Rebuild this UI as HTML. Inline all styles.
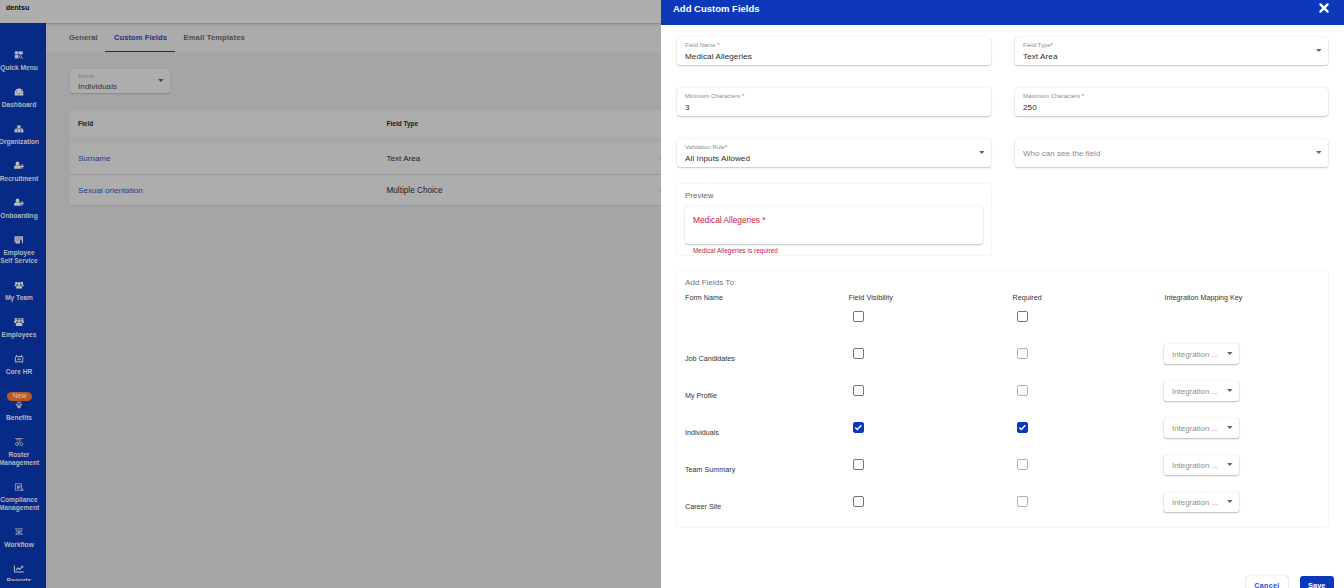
<!DOCTYPE html><html><head><meta charset="utf-8"><title>Add Custom Fields</title><style>
*{box-sizing:border-box;margin:0;padding:0}
html,body{width:1344px;height:588px;overflow:hidden;background:#a5a5a5;font-family:"Liberation Sans",sans-serif;}
.a{position:absolute}
.t{position:absolute;white-space:nowrap;line-height:10px;height:10px}
#left{position:absolute;left:0;top:0;width:661px;height:588px;overflow:hidden;background:#a5a5a5}
#topbar{position:absolute;left:0;top:0;width:661px;height:23px;background:#aeaeae;box-shadow:0 1.2px 2.8px rgba(0,0,0,.42);z-index:3}
#side{position:absolute;left:0;top:23px;width:46px;height:565px;background:#072a86;overflow:hidden;z-index:4}
#side .l{position:absolute;left:-11px;width:60px;text-align:center;font-size:6.6px;font-weight:700;color:#b7b7ba;line-height:8px;white-space:nowrap}
#side svg{position:absolute}
#tabs{position:absolute;left:46px;top:23px;width:615px;height:29px;background:#ababab}
.tab{position:absolute;top:9.5px;font-size:7.5px;font-weight:700;letter-spacing:.1px;color:#4f4a46;line-height:10px;white-space:nowrap}
.card{position:absolute;background:#fff;border-radius:2.7px;box-shadow:0 0 1.2px rgba(0,0,0,.2),0 1px 1.8px rgba(0,0,0,.2)}
.lab{position:absolute;left:8px;top:4.3px;font-size:6px;color:#8c8c8c;line-height:8px;white-space:nowrap}
.lab i{font-style:normal;color:#f0464b}
.val{position:absolute;left:8px;top:15.1px;font-size:8.1px;letter-spacing:.09px;color:#2b2b2b;line-height:10px;white-space:nowrap}
svg.arr{position:absolute;width:5.6px;height:3px}
#panel{position:absolute;left:661px;top:0;width:683px;height:588px;background:#fff;overflow:hidden}
#phead{position:absolute;left:0;top:0;width:683px;height:24.5px;background:#0b39ba}
.cb{position:absolute;width:10.6px;height:10.6px;border:1.25px solid #757575;border-radius:2px;background:#fff}
.cb.d{border-color:#b0b0b0}
.cb.on{border-color:#0b39ba;background:#0b39ba}
.fn{position:absolute;left:24px;font-size:7.2px;color:#333;line-height:10px;white-space:nowrap}
.h{position:absolute;font-size:7.2px;color:#333;line-height:10px;white-space:nowrap}
.dd{position:absolute;left:503px;width:75.3px;height:20.3px;background:#fff;border-radius:2.5px;box-shadow:0 0 1px rgba(0,0,0,.3),0 1px 2px rgba(0,0,0,.25)}
.dd span{position:absolute;left:8px;top:6.3px;font-size:7.9px;color:#8e8e8e;line-height:10px;white-space:nowrap}
</style></head><body>
<div id="left">
<div id="topbar"><div class="t" style="left:6px;top:2.6px;font-size:7.1px;font-weight:700;color:#0a0a0a">dentsu</div></div>
<div id="side">
<svg style="left:13.2px;top:26.5px" width="12" height="10" viewBox="-6 -5 12 10"><g fill="#bcbcbc"><rect x="-4.2" y="-3.6" width="3.7" height="3"/><rect x="0" y="-3.6" width="3.8" height="3"/><rect x="-4.2" y="0.1" width="3.7" height="3.3"/></g><circle cx="1.5" cy="1.6" r="1" fill="none" stroke="#bcbcbc" stroke-width=".8"/><path d="M2.3 2.4L3.8 3.8" stroke="#bcbcbc" stroke-width=".9"/></svg>
<div class="l" style="top:40.5px">Quick Menu</div>
<svg style="left:13.2px;top:63.7px" width="12" height="10" viewBox="-6 -5 12 10"><path d="M-4.3 3.4V0.6A4.3 4.1 0 0 1 4.3 0.6V3.4Z" fill="#bcbcbc"/><g fill="#3a5aa8"><circle cx="-2.6" cy="0.8" r=".55"/><circle cx="-1.7" cy="-1.2" r=".5"/><circle cx="2.2" cy="-1.2" r=".5"/><circle cx="2.8" cy="0.8" r=".5"/><circle cx="0.2" cy="1.8" r=".8"/></g></svg>
<div class="l" style="top:77.5px">Dashboard</div>
<svg style="left:13.2px;top:100.7px" width="12" height="10" viewBox="-6 -5 12 10"><g fill="#bcbcbc"><rect x="-1.8" y="-3.5" width="3.4" height="2.4"/><rect x="-.5" y="-1.2" width=".9" height="1.4"/><rect x="-3.6" y="-.5" width="7.2" height=".9"/><rect x="-4.4" y=".3" width="2.7" height="3.1"/><rect x="-1.4" y=".3" width="2.7" height="3.1"/><rect x="1.7" y=".3" width="2.7" height="3.1"/></g></svg>
<div class="l" style="top:114.5px">Organization</div>
<svg style="left:13.2px;top:138.2px" width="12" height="10" viewBox="-6 -5 12 10"><g fill="#bcbcbc"><circle cx="-1.5" cy="-2.6" r="1.9"/><path d="M-4.9 2.8V1.2A2 2 0 0 1 -2.9 -.8H-.1A2 2 0 0 1 1.9 1.2V2.8Z"/><rect x="1.2" y="-.2" width="3.7" height="1.1"/><rect x="2.5" y="-1.9" width="1.1" height="4.5"/></g></svg>
<div class="l" style="top:151.5px">Recruitment</div>
<svg style="left:13.2px;top:174.8px" width="12" height="10" viewBox="-6 -5 12 10"><g fill="#bcbcbc"><circle cx="-1.5" cy="-2.6" r="1.9"/><path d="M-4.9 2.8V1.2A2 2 0 0 1 -2.9 -.8H-.1A2 2 0 0 1 1.9 1.2V2.8Z"/><rect x="1.2" y="-.2" width="3.7" height="1.1"/><rect x="2.5" y="-1.9" width="1.1" height="4.5"/></g></svg>
<div class="l" style="top:188.5px">Onboarding</div>
<svg style="left:13.2px;top:211.5px" width="12" height="10" viewBox="-6 -5 12 10"><rect x="-4" y="-3.2" width="7.6" height="5" fill="#8f95ab" stroke="#bcbcbc" stroke-width=".9"/><rect x="-3.2" y="1.8" width="4.6" height="1.7" fill="#bcbcbc"/><rect x="1" y=".4" width="2.2" height="3.2" fill="#072a86"/><rect x="3.1" y=".4" width=".8" height="3.1" fill="#bcbcbc"/></svg>
<div class="l" style="top:225.5px">Employee</div>
<div class="l" style="top:233.5px">Self Service</div>
<svg style="left:13.2px;top:256.5px" width="12" height="10" viewBox="-6 -5 12 10"><g fill="#bcbcbc"><circle cx="-2.7" cy="-2" r="1.25"/><circle cx="2.9" cy="-2" r="1.25"/><circle cx=".1" cy="-1.2" r="1.7"/><path d="M-4.5 1.3V.2A1.2 1.2 0 0 1 -3.3 -.8H-2A3 3 0 0 0 -2.6 1.3Z"/><path d="M4.7 1.3V.2A1.2 1.2 0 0 0 3.5 -.8H2.2A3 3 0 0 1 2.8 1.3Z"/><path d="M-2.9 3.5V2.4A2 2 0 0 1 -.9 .6H1.1A2 2 0 0 1 3.1 2.4V3.5Z"/></g></svg>
<div class="l" style="top:270.6px">My Team</div>
<svg style="left:13.2px;top:294.0px" width="12" height="10" viewBox="-6 -5 12 10"><g fill="#8f95ab"><rect x="-4.8" y="-4" width="2.9" height="1.2"/><rect x="-1.3" y="-4" width="2.9" height="1.2"/><rect x="2.2" y="-4" width="2.6" height="1.2"/></g><g fill="#bcbcbc"><circle cx="-3" cy="-1.7" r="1.2"/><circle cx="3.2" cy="-1.7" r="1.2"/><circle cx=".1" cy="-1.2" r="1.6"/><path d="M-4.9 1V0A1 1 0 0 1 -3.9 -.9H-2.2A3 3 0 0 0 -2.6 1Z"/><path d="M4.9 1V0A1 1 0 0 0 3.9 -.9H2.4A3 3 0 0 1 2.8 1Z"/><path d="M-3.2 4V2.4A2 2 0 0 1 -1.2 .6H1.4A2 2 0 0 1 3.4 2.4V4Z"/></g></svg>
<div class="l" style="top:307.5px">Employees</div>
<svg style="left:13.2px;top:330.8px" width="12" height="10" viewBox="-6 -5 12 10"><g fill="none" stroke="#bcbcbc" stroke-width=".95"><rect x="-3.6" y="-2.4" width="7.4" height="5.2" rx=".6"/><path d="M-2.4 -2.4V-4M2.4 -2.4V-4"/><path d="M-3.2 2.9V3.8M3.4 2.9V3.8"/></g><rect x="-1.7" y="-.6" width="3.6" height="1.7" fill="#8f95ab"/></svg>
<div class="l" style="top:344.5px">Core HR</div>
<svg style="left:13.2px;top:376.6px" width="12" height="10" viewBox="-6 -5 12 10"><g fill="#8f95ab"><circle cx="0" cy="1.6" r="2"/><circle cx="-2.2" cy="-.4" r="1.1"/><circle cx="2.2" cy="-.4" r="1.1"/><circle cx="-1" cy="-2.4" r="1"/><circle cx="1.1" cy="-2.4" r="1"/></g><circle cx="0" cy="1.7" r=".8" fill="#bcbcbc"/></svg>
<div class="l" style="top:390.5px">Benefits</div>
<svg style="left:13.2px;top:414.0px" width="12" height="10" viewBox="-6 -5 12 10"><g fill="none" stroke="#8f95ab" stroke-width=".9"><path d="M-4 -3.5H4.2"/><path d="M-3 -2.2H1M2 -2.6L-1 1.5"/><circle cx="-2" cy="2" r="1.5"/><circle cx="2.2" cy="2" r="1.5"/></g></svg>
<div class="l" style="top:427.5px">Roster</div>
<div class="l" style="top:435.5px">Management</div>
<svg style="left:13.2px;top:458.7px" width="12" height="10" viewBox="-6 -5 12 10"><rect x="-3.6" y="-3.2" width="6.2" height="6.4" fill="none" stroke="#8f95ab" stroke-width=".9"/><rect x="-2.1" y="-1.4" width="2.6" height="3.2" fill="#8f95ab"/><path d="M1.2 -2V1" stroke="#8f95ab" stroke-width=".7"/><circle cx="3.2" cy="2.8" r="1" fill="#072a86" stroke="#bcbcbc" stroke-width=".7"/></svg>
<div class="l" style="top:472.5px">Compliance</div>
<div class="l" style="top:480.5px">Management</div>
<svg style="left:13.2px;top:503.5px" width="12" height="10" viewBox="-6 -5 12 10"><g stroke="#8f95ab" stroke-width=".9" fill="none"><path d="M-4 -3.2H4M-3 -1.2L3 2.4M3 -1.2L-3 2.4M0 -3V3.4"/></g><g fill="#8f95ab"><circle cx="0" cy=".3" r="1.3"/><circle cx="-2.6" cy="2.2" r=".9"/><circle cx="2.8" cy="2.2" r=".9"/><circle cx="2.6" cy="-1.6" r=".8"/><circle cx="-2.6" cy="-1.6" r=".8"/></g></svg>
<div class="l" style="top:517.5px">Workflow</div>
<svg style="left:13.2px;top:540.5px" width="12" height="10" viewBox="-6 -5 12 10"><path d="M-4.6 -3.5V3H4.8" fill="none" stroke="#bcbcbc" stroke-width="1"/><path d="M-3 1.2L-1 -1L.6 .4L3.6 -2.6" fill="none" stroke="#bcbcbc" stroke-width="1.1"/><path d="M2 -3.2H4.2V-1Z" fill="#bcbcbc"/></svg>
<div class="l" style="top:553.6px">Reports</div>
<div class="a" style="left:7px;top:369px;width:25px;height:9px;border-radius:4.5px;background:#b95a28"></div><div class="a" style="left:7px;top:367.8px;width:25px;line-height:9px;text-align:center;font-size:6.9px;font-weight:400;color:#d6c6bc">New</div>
<div class="a" style="left:0;top:558px;width:46px;height:10px;background:#072a86"></div>
</div>
<div id="tabs">
<div class="tab" style="left:23px">General</div>
<div class="tab" style="left:68px;color:#15338f">Custom Fields</div>
<div class="tab" style="left:137.5px;letter-spacing:.18px">Email Templates</div>
<div class="a" style="left:59px;top:27.6px;width:70px;height:1.4px;background:#0b2f9c"></div>
</div>
<div class="a" style="left:70px;top:68.5px;width:100.3px;height:24.6px;background:#adadad;border-radius:2.5px;box-shadow:0 0 1px rgba(0,0,0,.13),0 1px 1.6px rgba(0,0,0,.16)"><div class="lab" style="top:3.5px;color:#777;font-size:5.6px">Forms</div><div class="val" style="top:13.3px;color:#333">Individuals</div><svg class="arr" style="left:88px;top:10.3px" viewBox="0 0 5.6 3"><path d="M0 0H5.6L2.8 3Z" fill="#4a4a4a"/></svg></div>
<div class="a" style="left:70px;top:110px;width:600px;height:27px;background:#adadad"></div>
<div class="a" style="left:70px;top:137px;width:600px;height:6px;background:#a8a8a8"></div>
<div class="a" style="left:70px;top:143px;width:600px;height:31.5px;background:#adadad;border-bottom:1px solid #999"></div>
<div class="a" style="left:70px;top:174.5px;width:600px;height:31px;background:#adadad;border-bottom:1px solid #999"></div>
<div class="t" style="left:78px;top:118.5px;font-size:6.6px;font-weight:700;color:#1a1a1a">Field</div>
<div class="t" style="left:386.5px;top:118.5px;font-size:6.5px;font-weight:700;color:#1a1a1a">Field Type</div>
<div class="t" style="left:78px;top:154px;font-size:8px;color:#1d3a94">Surname</div>
<div class="t" style="left:78px;top:186px;font-size:8.1px;color:#1d3a94">Sexual orientation</div>
<div class="t" style="left:386.5px;top:154px;font-size:8.1px;color:#222">Text Area</div>
<div class="t" style="left:386.5px;top:186px;font-size:8.2px;color:#222">Multiple Choice</div>
<div class="a" style="left:660px;top:121.5px;width:1px;height:1.6px;background:#b98a3c"></div>
<div class="a" style="left:660px;top:156px;width:1px;height:1.6px;background:#b98a3c"></div>
<div class="a" style="left:660px;top:159px;width:1px;height:1.6px;background:#b98a3c"></div>
<div class="a" style="left:660px;top:188px;width:1px;height:1.6px;background:#b98a3c"></div>
<div class="a" style="left:660px;top:191px;width:1px;height:1.6px;background:#b98a3c"></div>
</div>
<div id="panel">
<div id="phead"><div class="t" style="left:12px;top:4px;font-size:9.5px;font-weight:700;color:#fff">Add Custom Fields</div><svg class="a" style="left:657px;top:2.4px" width="12" height="12" viewBox="0 0 12 12"><path d="M2.4 2.4 L9.6 9.6 M9.6 2.4 L2.4 9.6" stroke="#fff" stroke-width="2.3" stroke-linecap="round" stroke-linejoin="round"/></svg></div>
<div class="card" style="left:16px;top:36.7px;width:314px;height:28.2px"><div class="lab">Field Name<i> *</i></div><div class="val">Medical Allegeries</div></div>
<div class="card" style="left:354px;top:36.7px;width:313.3px;height:28.2px"><div class="lab">Field Type<i>*</i></div><div class="val">Text Area</div><svg class="arr" style="right:6.9px;top:12.3px" viewBox="0 0 5.6 3"><path d="M0 0H5.6L2.8 3Z" fill="#686868"/></svg></div>
<div class="card" style="left:16px;top:87.7px;width:314px;height:28.2px"><div class="lab">Minimum Characters<i> *</i></div><div class="val">3</div></div>
<div class="card" style="left:354px;top:87.7px;width:313.3px;height:28.2px"><div class="lab">Maximum Characters<i> *</i></div><div class="val">250</div></div>
<div class="card" style="left:16px;top:138.7px;width:314px;height:28.2px"><div class="lab">Validation Rule<i>*</i></div><div class="val">All Inputs Allowed</div><svg class="arr" style="right:6.9px;top:12.3px" viewBox="0 0 5.6 3"><path d="M0 0H5.6L2.8 3Z" fill="#686868"/></svg></div>
<div class="card" style="left:354px;top:138.7px;width:313.3px;height:28.2px"><div class="val" style="top:10px;font-size:8.05px;letter-spacing:0;color:#8a8a8a">Who can see the field</div><svg class="arr" style="right:6.9px;top:12.3px" viewBox="0 0 5.6 3"><path d="M0 0H5.6L2.8 3Z" fill="#686868"/></svg></div>
<div class="card" style="left:16px;top:183.6px;width:314px;height:71.8px;box-shadow:0 0 2px rgba(0,0,0,.14)"><div class="t" style="left:8px;top:7.2px;font-size:8px;color:#666">Preview</div><div class="card" style="left:7.8px;top:22.3px;width:298.4px;height:38.1px"><div class="t" style="left:8.3px;top:9.3px;font-size:8.3px;color:#c2183a">Medical Allegeries <span style="color:#e0263a">*</span></div></div><div class="t" style="left:16px;top:62.3px;font-size:6.3px;letter-spacing:.1px;color:#c2183a">Medical Allegeries is required</div></div>
<div class="card" style="left:16px;top:270.6px;width:651.3px;height:256.2px;box-shadow:0 0 2px rgba(0,0,0,.14)"></div>
<div class="t" style="left:24px;top:277.7px;font-size:8.1px;color:#757575">Add Fields To:</div>
<div class="h" style="left:24px;top:292.6px">Form Name</div>
<div class="h" style="left:187.5px;top:292.6px;font-size:7.35px">Field Visibility</div>
<div class="h" style="left:351.5px;top:292.6px">Required</div>
<div class="h" style="left:503.5px;top:292.6px">Integration Mapping Key</div>
<div class="cb" style="left:192.3px;top:311.3px"></div>
<div class="cb" style="left:356.3px;top:311.3px"></div>
<div class="cb" style="left:192.3px;top:348.3px"></div>
<div class="cb d" style="left:356.3px;top:348.3px"></div>
<div class="fn" style="top:353.5px">Job Candidates</div>
<div class="dd" style="top:343.8px"><span>Integration ...</span><svg class="arr" style="left:63.3px;top:8.5px" viewBox="0 0 5.6 3"><path d="M0 0H5.6L2.8 3Z" fill="#686868"/></svg></div>
<div class="cb" style="left:192.3px;top:385.3px"></div>
<div class="cb d" style="left:356.3px;top:385.3px"></div>
<div class="fn" style="top:390.5px">My Profile</div>
<div class="dd" style="top:380.8px"><span>Integration ...</span><svg class="arr" style="left:63.3px;top:8.5px" viewBox="0 0 5.6 3"><path d="M0 0H5.6L2.8 3Z" fill="#686868"/></svg></div>
<div class="cb on" style="left:192.3px;top:422.3px"><svg class="a" style="left:-1.25px;top:-1.25px" width="10.6" height="10.6" viewBox="0 0 11 11"><path d="M2.4 5.6 L4.5 7.7 L8.7 3.3" fill="none" stroke="#fff" stroke-width="1.5"/></svg></div>
<div class="cb on" style="left:356.3px;top:422.3px"><svg class="a" style="left:-1.25px;top:-1.25px" width="10.6" height="10.6" viewBox="0 0 11 11"><path d="M2.4 5.6 L4.5 7.7 L8.7 3.3" fill="none" stroke="#fff" stroke-width="1.5"/></svg></div>
<div class="fn" style="top:427.5px">Individuals</div>
<div class="dd" style="top:417.8px"><span>Integration ...</span><svg class="arr" style="left:63.3px;top:8.5px" viewBox="0 0 5.6 3"><path d="M0 0H5.6L2.8 3Z" fill="#686868"/></svg></div>
<div class="cb" style="left:192.3px;top:459.3px"></div>
<div class="cb d" style="left:356.3px;top:459.3px"></div>
<div class="fn" style="top:464.5px">Team Summary</div>
<div class="dd" style="top:454.8px"><span>Integration ...</span><svg class="arr" style="left:63.3px;top:8.5px" viewBox="0 0 5.6 3"><path d="M0 0H5.6L2.8 3Z" fill="#686868"/></svg></div>
<div class="cb" style="left:192.3px;top:496.3px"></div>
<div class="cb d" style="left:356.3px;top:496.3px"></div>
<div class="fn" style="top:501.5px">Career Site</div>
<div class="dd" style="top:491.8px"><span>Integration ...</span><svg class="arr" style="left:63.3px;top:8.5px" viewBox="0 0 5.6 3"><path d="M0 0H5.6L2.8 3Z" fill="#686868"/></svg></div>
<div class="a" style="left:584.5px;top:576px;width:42.2px;height:20px;border-radius:3px;background:#fff;box-shadow:0 0 1px rgba(0,0,0,.3),0 1px 2px rgba(0,0,0,.2)"><div class="t" style="left:8.8px;top:4.5px;font-size:7.2px;font-weight:700;color:#2a52c8;letter-spacing:.3px">Cancel</div></div>
<div class="a" style="left:639px;top:576px;width:33.8px;height:20px;border-radius:3px;background:#0b39ba"><div class="t" style="left:8.1px;top:4.5px;font-size:7.4px;font-weight:700;color:#fff">Save</div></div>
</div>
</body></html>
